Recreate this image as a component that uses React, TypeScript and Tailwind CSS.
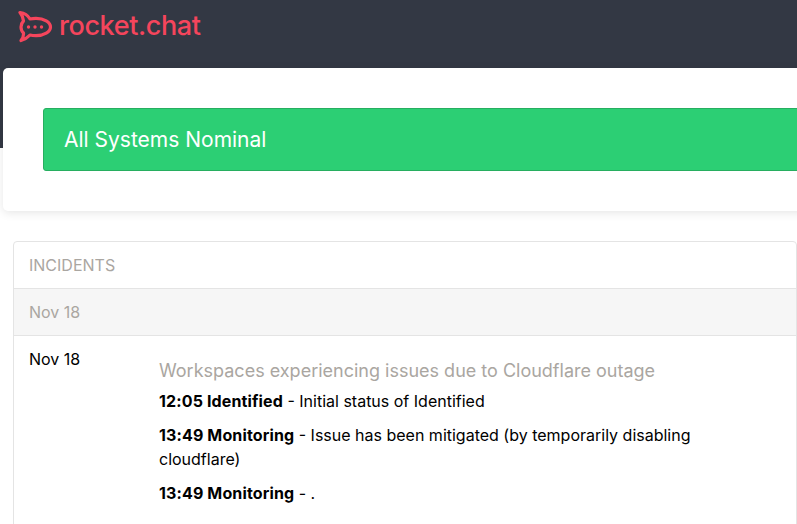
function Logo() {
  return (
    <svg width="36" height="33" viewBox="0 0 36 33" className="shrink-0">
      <path
        d="M5.500 11C5.200 8 4 5 2 2.500C6 3 9.800 5.200 12 9C14 8.500 16 8.300 18 8.300C26 8.300 32.500 12 32.500 17C32.500 22 26 25.700 18 25.700C15.800 25.700 13.800 25.500 12 25C9.500 27.800 6.500 29.500 3 30.500C4.800 28.300 5.800 26 5.500 23C3.800 21.500 3 19.200 3 17C3 14.800 4 12.500 5.500 11Z"
        fill="none"
        stroke="#f5455c"
        strokeWidth="3.200"
        strokeLinejoin="round"
      />
      <circle cx="10.500" cy="17" r="1.700" fill="#f5455c" />
      <circle cx="17" cy="17" r="1.700" fill="#f5455c" />
      <circle cx="23.500" cy="17" r="1.700" fill="#f5455c" />
    </svg>
  )
}

export default function App() {
  return (
    <div className="h-[524px] w-[797px] overflow-hidden bg-white font-['Inter',sans-serif] text-[16px] leading-[24px] text-black">
      <header className="h-[148px] bg-[#333844] pl-[18px] pt-[10px]">
        <div className="flex items-center gap-[5px]">
          <Logo />
          <span className="-mt-[1px] text-[27px] font-medium leading-[32px] tracking-[-0.4px] text-[#f5455c]">
            rocket.chat
          </span>
        </div>
      </header>

      <main className="-mt-[80px] pl-[3px]">
        <section className="w-[860px] rounded-[5px] bg-white px-[40px] py-[40px] shadow-[0_2px_10px_rgba(0,0,0,0.1)]">
          <div className="flex h-[63px] items-center rounded-[3px] border border-[#27ae60] bg-[#2ccf74] pl-[20px] text-[21px] text-white">
            All Systems Nominal
          </div>
        </section>

        <section className="ml-[10px] mt-[30px] h-[320px] w-[784px] rounded-t-[4px] border border-[#e4e4e4]">
          <h2 className="flex h-[47px] items-center border-b border-[#e4e4e4] pl-[15px] text-[#aaa6a1]">
            INCIDENTS
          </h2>
          <div className="flex h-[47px] items-center border-b border-[#e4e4e4] bg-[#f6f6f6] pl-[15px] text-[#aaa6a1]">
            Nov 18
          </div>
          <div className="flex pl-[15px] pt-[11px]">
            <div className="w-[130px] shrink-0">Nov 18</div>
            <div className="w-[560px] pt-[12px]">
              <h3 className="text-[18px] leading-[24px] text-[#aaa6a1]">
                Workspaces experiencing issues due to Cloudflare outage
              </h3>
              <p className="mt-[6px]">
                <strong className="font-bold tracking-[0.13px]">12:05 Identified</strong> - Initial status of Identified
              </p>
              <p className="mt-[10px]">
                <strong className="font-bold tracking-[0.13px]">13:49 Monitoring</strong> - Issue has been mitigated (by temporarily disabling cloudflare)
              </p>
              <p className="mt-[10px]">
                <strong className="font-bold tracking-[0.13px]">13:49 Monitoring</strong> - .
              </p>
            </div>
          </div>
        </section>
      </main>
    </div>
  )
}
